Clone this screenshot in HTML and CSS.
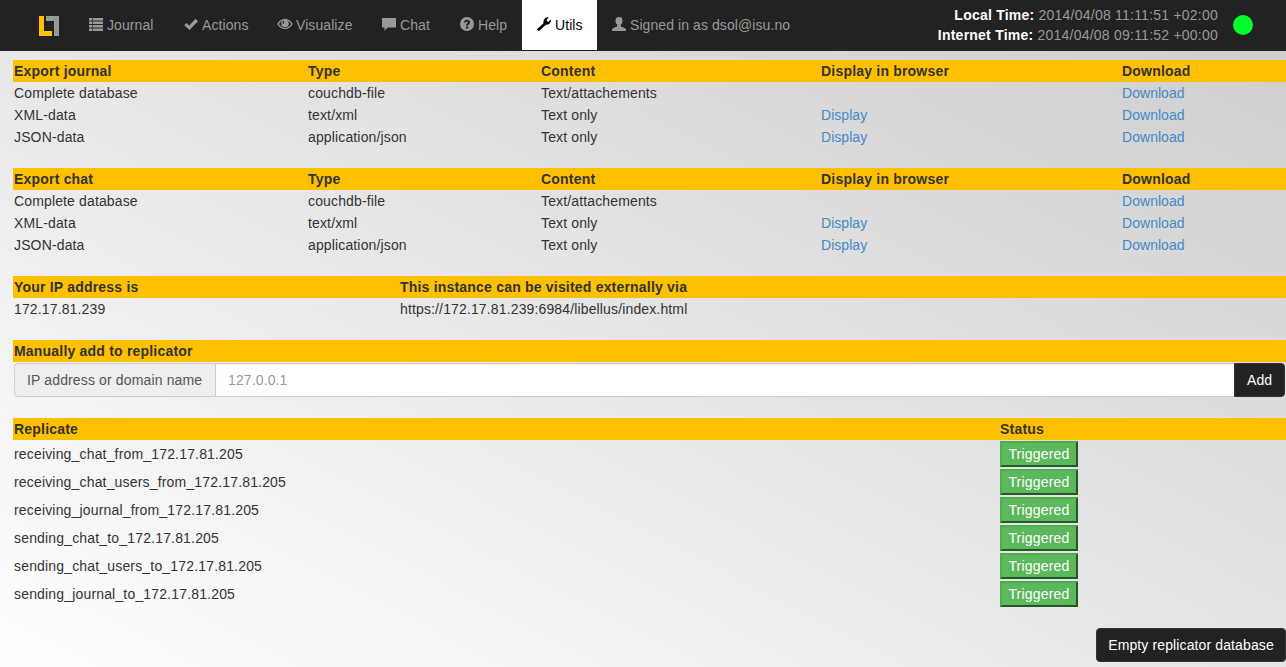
FILE: index.html
```html
<!DOCTYPE html>
<html lang="en">
<head>
<meta charset="utf-8">
<title>Libellus</title>
<link rel="stylesheet" href="styles.css">
</head>
<body>
<header class="navbar">
  <a class="brand"><svg width="20" height="20" viewBox="0 0 20 20"><path fill="#ffc000" d="M0 0h5v15h8v5H0z"/><path fill="#999" d="M7 0h13v20h-5V5H7z"/></svg></a>
  <ul class="nav">
    <li class="journal"><svg class="icon" viewBox="0 0 14 14"><path d="M0 1h3v2.400H0zM3.600 1H14v2.400H3.600zM0 4.500h3v2.400H0zM3.600 4.500H14v2.400H3.600zM0 8h3v2.400H0zM3.600 8H14v2.400H3.600zM0 11.500h3v2.400H0zM3.600 11.500H14v2.400H3.600z"/></svg><span>Journal</span></li>
    <li class="actions"><svg class="icon" viewBox="0 0 14 14"><path d="M.2 8.200L2.400 5.900l2.900 2.500L11.500 1.800 14 4.300 5.600 12.900z"/></svg><span>Actions</span></li>
    <li class="visualize"><svg class="icon wide" viewBox="0 0 16 14"><path fill-rule="evenodd" d="M.2 7C2 4 4.700 1.800 8 1.800s6 2.200 7.800 5.200c-1.800 3-4.500 5.200-7.800 5.200S2 10 .2 7zM1.800 7c1.300 2.300 3.600 4 6.200 4s4.900-1.700 6.200-4C12.900 4.700 10.600 3 8 3S3.100 4.700 1.800 7z"/><circle cx="8" cy="6.500" r="3.800"/><path class="cut" d="M7.600 3.800c-1.500.2-2.300 1.200-2.200 2.500l1.500.6c-.2-1.400 0-2.200.7-3.100z"/></svg><span>Visualize</span></li>
    <li class="chat"><svg class="icon" viewBox="0 0 14 14"><path d="M.5 1h13q.5 0 .5.500v8.500q0 .5-.5.500H5.800L2.500 13.800V10.500h-2Q0 10.500 0 10V1.500Q0 1 .5 1z"/></svg><span>Chat</span></li>
    <li class="help"><svg class="icon" viewBox="0 0 14 14"><circle cx="7" cy="7" r="7"/><path class="cut" d="M4 5.500C4 3.500 5.200 2.700 7 2.700s3.200 1 3.200 2.600c0 1.700-2 2-2 3.200H6c0-2.300 1.800-2.200 1.800-3.300 0-.5-.3-.8-.8-.8-.6 0-.9.400-.9 1.100zM6 9.400h2.200v2H6z"/></svg><span>Help</span></li>
    <li class="utils active"><svg class="icon" viewBox="0 0 14 14"><path d="M.3 12.100L6.500 6.300C6 3.500 7.300.7 10.600.3l1.200.1-2.200 2.300.4 1.700 1.700.3L13.900 2.500c.4 3.300-1.800 5.500-5 5.300L2.600 13.500c-.5.500-1 .5-1.500.1l-.7-.5c-.3-.3-.4-.7-.1-1z"/></svg><span>Utils</span></li>
    <li><svg class="icon" viewBox="0 0 14 14"><path d="M7 0c2.200 0 3.500 1.200 3.500 3.300 0 2-.6 3.500-1.700 4.500v1.300c0 .6 1 .9 2.400 1.500 2 .7 2.800 1.300 2.800 2.600v.8H0v-.8c0-1.300.8-1.900 2.800-2.600 1.400-.6 2.400-.9 2.400-1.500V7.800C4.100 6.800 3.500 5.300 3.500 3.300 3.500 1.200 4.800 0 7 0z"/></svg><span>Signed in as dsol@isu.no</span></li>
  </ul>
  <div class="clock"><div><b>Local Time:</b> 2014/04/08 11:11:51 +02:00</div><div><b>Internet Time:</b> 2014/04/08 09:11:52 +00:00</div></div>
  <span class="status-dot"></span>
</header>
<main class="content">
  <table class="export">
    <tr><th>Export journal</th><th>Type</th><th>Content</th><th>Display in browser</th><th>Download</th></tr>
    <tr><td>Complete database</td><td>couchdb-file</td><td>Text/attachements</td><td></td><td><a>Download</a></td></tr>
    <tr><td>XML-data</td><td>text/xml</td><td>Text only</td><td><a>Display</a></td><td><a>Download</a></td></tr>
    <tr><td>JSON-data</td><td>application/json</td><td>Text only</td><td><a>Display</a></td><td><a>Download</a></td></tr>
  </table>
  <table class="export">
    <tr><th>Export chat</th><th>Type</th><th>Content</th><th>Display in browser</th><th>Download</th></tr>
    <tr><td>Complete database</td><td>couchdb-file</td><td>Text/attachements</td><td></td><td><a>Download</a></td></tr>
    <tr><td>XML-data</td><td>text/xml</td><td>Text only</td><td><a>Display</a></td><td><a>Download</a></td></tr>
    <tr><td>JSON-data</td><td>application/json</td><td>Text only</td><td><a>Display</a></td><td><a>Download</a></td></tr>
  </table>
  <table class="address">
    <tr><th>Your IP address is</th><th>This instance can be visited externally via</th></tr>
    <tr><td>172.17.81.239</td><td>https://172.17.81.239:6984/libellus/index.html</td></tr>
  </table>
  <table>
    <tr><th>Manually add to replicator</th></tr>
    <tr><td><div class="input-group"><label class="addon" for="host">IP address or domain name</label><input id="host" type="text" placeholder="127.0.0.1"><button class="btn add">Add</button></div></td></tr>
  </table>
  <table class="replicate">
    <tr><th>Replicate</th><th>Status</th></tr>
    <tr><td>receiving_chat_from_172.17.81.205</td><td><button class="state">Triggered</button></td></tr>
    <tr><td>receiving_chat_users_from_172.17.81.205</td><td><button class="state">Triggered</button></td></tr>
    <tr><td>receiving_journal_from_172.17.81.205</td><td><button class="state">Triggered</button></td></tr>
    <tr><td>sending_chat_to_172.17.81.205</td><td><button class="state">Triggered</button></td></tr>
    <tr><td>sending_chat_users_to_172.17.81.205</td><td><button class="state">Triggered</button></td></tr>
    <tr><td>sending_journal_to_172.17.81.205</td><td><button class="state">Triggered</button></td></tr>
  </table>
  <div class="footer-actions"><button class="btn">Empty replicator database</button></div>
</main>
</body>
</html>
```
FILE: styles.css
```css
* { box-sizing: border-box; }
html { height: 100%; }
body {
  margin: 0;
  height: 100%;
  overflow: hidden;
  font: 14px/20px "Liberation Sans", Arial, sans-serif;
  color: #333;
  background: linear-gradient(to top right, #fff, #ccc);
}
.navbar {
  display: flex;
  height: 51px;
  background: #222;
  border-bottom: 1px solid #222;
  color: #999;
}
.brand { width: 74px; padding: 16px 0 0 39px; }
.brand svg { display: block; }
.nav { display: flex; margin: 0; padding: 0; list-style: none; letter-spacing: .08px; }
.nav li { display: flex; gap: 4px; padding: 15px 0 15px 15px; white-space: nowrap; }
.icon { flex: none; width: 14px; height: 14px; margin-top: 2px; fill: currentColor; }
.icon.wide { width: 16px; margin-right: -1px; }
.cut { fill: #222; }
.journal { width: 95px; }
.actions { width: 93px; }
.visualize { width: 105px; }
.chat { width: 78px; }
.help { width: 77px; }
.utils { width: 75px; }
.nav .active { background: #fff; color: #000; }
.clock { margin-left: auto; padding-top: 5px; text-align: right; white-space: nowrap; letter-spacing: .23px; }
.clock b { color: #fff; }
.status-dot { width: 20px; height: 20px; margin: 15px 33px 0 15px; border-radius: 50%; background: #00ff2a; }
.content { padding: 9px 0 0 13px; }
table { width: 100%; margin-bottom: 20px; table-layout: fixed; border-collapse: collapse; }
th, td { height: 22px; padding: 1px; text-align: left; }
td { letter-spacing: .14px; }
th { background: #ffc000; letter-spacing: .2px; }
a { color: #428bca; letter-spacing: .04px; }
.export th:nth-child(1) { width: 294px; }
.export th:nth-child(2) { width: 233px; }
.export th:nth-child(3) { width: 280px; }
.export th:nth-child(4) { width: 301px; }
.address th:first-child { width: 386px; }
.replicate th:first-child { width: 986px; }
.replicate td { letter-spacing: .17px; }
button, input { font: inherit; }
button { letter-spacing: .12px; }
input { letter-spacing: .12px; }
.input-group { display: flex; height: 34px; }
.addon {
  width: 202px;
  padding: 6px 12px;
  border: 1px solid #ccc;
  border-radius: 4px 0 0 4px;
  background: #eee;
  color: #555;
  white-space: nowrap;
}
input {
  flex: 1;
  min-width: 0;
  padding: 6px 12px;
  border: 1px solid #ccc;
  border-width: 1px 0;
  border-radius: 0;
  background: #fff;
  box-shadow: inset 0 1px 1px rgba(0, 0, 0, .075);
}
input::placeholder { color: #999; opacity: 1; }
.btn {
  height: 34px;
  padding: 6px 12px;
  border: 1px solid #333;
  border-radius: 4px;
  background: #222;
  color: #fff;
  white-space: nowrap;
}
.add { width: 51px; border-radius: 0 4px 4px 0; }
.state {
  display: block;
  width: 78px;
  height: 26px;
  padding: 1px 0;
  border: 2px solid;
  border-color: #4cae4c #265726 #265726 #4cae4c;
  background: #5cb85c;
  color: #fff;
  letter-spacing: .2px;
}
.footer-actions { display: flex; justify-content: flex-end; }
.footer-actions .btn { width: 190px; padding: 6px 0; }
```
